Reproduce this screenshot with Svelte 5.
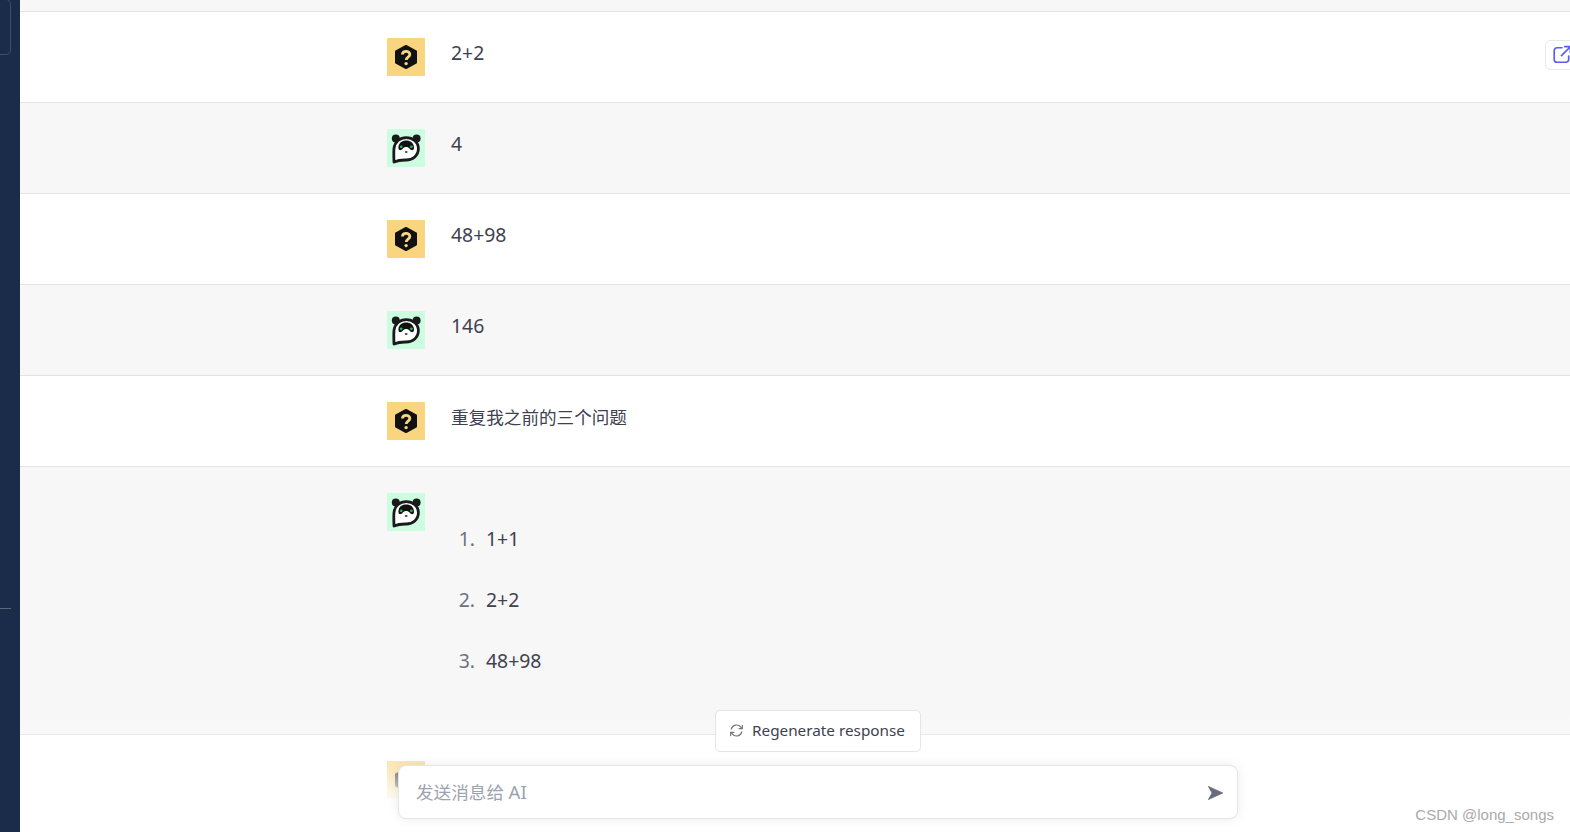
<script lang="ts">
  type Msg = { role: 'user' | 'ai'; text?: string; items?: string[]; share?: boolean; cjk?: boolean };

  const messages: Msg[] = [
    { role: 'user', text: '2+2', share: true },
    { role: 'ai', text: '4' },
    { role: 'user', text: '48+98' },
    { role: 'ai', text: '146' },
    { role: 'user', text: '重复我之前的三个问题', cjk: true },
    { role: 'ai', items: ['1+1', '2+2', '48+98'] },
    { role: 'user', text: '' }
  ];
</script>

{#snippet userAvatar()}
  <div class="avatar user">
    <svg viewBox="0 0 38 38" width="38" height="38">
      <path d="M19 8 L29 13.5 V24.5 L19 30 L9 24.5 V13.5 Z" fill="#111" stroke="#111" stroke-width="2" stroke-linejoin="round" />
      <path d="M15.4 16.6 C15.4 12.4 22.8 12.2 22.8 16.4 C22.8 19.2 19.2 19 19.2 22" fill="none" stroke="#f9d57f" stroke-width="2.8" />
      <circle cx="19.1" cy="25.6" r="1.7" fill="#f9d57f" />
    </svg>
  </div>
{/snippet}

{#snippet aiAvatar()}
  <div class="avatar ai">
    <svg viewBox="0 0 38 38" width="38" height="38">
      <circle cx="8.8" cy="9.4" r="4" fill="#1a1a1a" />
      <circle cx="29.6" cy="9.4" r="4" fill="#1a1a1a" />
      <path d="M7 33 C6.8 27 6.6 23 7 19.4 C7.8 12.6 13 8.6 19.2 8.6 C26 8.6 31.4 13.2 31.4 19.6 C31.4 26.6 25.8 31 19.2 31 C16 31 12 30.8 7 33 Z" fill="#fff" stroke="#1a1a1a" stroke-width="2.8" stroke-linejoin="round" />
      <path d="M11.4 18.6 C11.6 13.8 15 11.6 19.2 11.6 C23.4 11.6 26.8 13.8 27 18.6 C27.1 21.8 24.4 22 22.8 19.8 C21.8 18.6 20.6 18 19.2 18 C17.8 18 16.6 18.6 15.6 19.8 C14 22 11.3 21.8 11.4 18.6 Z" fill="#111" />
      <circle cx="14.2" cy="17.8" r="1.4" fill="#22b35e" />
      <circle cx="24.4" cy="17.8" r="1.4" fill="#22b35e" />
      <ellipse cx="19.2" cy="23" rx="1.4" ry="1" fill="#444" />
    </svg>
  </div>
{/snippet}

<div class="page">
  <aside class="sidebar">
    <div class="sidebar-box"></div>
    <div class="sidebar-line"></div>
  </aside>

  <main class="main">
    <div class="top-band"></div>
    {#each messages as msg}
      <section class="row" class:alt={msg.role === 'ai'}>
        {#if msg.role === 'user'}
          {@render userAvatar()}
        {:else}
          {@render aiAvatar()}
        {/if}
        <div class="body" class:cjk={msg.cjk}>
          {#if msg.items}
            <ol>
              {#each msg.items as item}
                <li>{item}</li>
              {/each}
            </ol>
          {:else}
            {msg.text}
          {/if}
        </div>
        {#if msg.share}
          <button class="share" aria-label="share">
            <svg viewBox="0 0 18 18" width="20" height="20" fill="none" stroke="#5a5cf6" stroke-width="1.5" stroke-linecap="round" stroke-linejoin="round">
              <path d="M9 2.5 H4.5 A2.5 2.5 0 0 0 2 5 V13 A2.5 2.5 0 0 0 4.5 15.5 H12.5 A2.5 2.5 0 0 0 15 13 V10" />
              <path d="M8.5 9.5 L16 2 M11.5 1.5 H16.5 V6.5" />
            </svg>
          </button>
        {/if}
      </section>
    {/each}

    <div class="composer">
      <button class="regen">
        <svg viewBox="0 0 16 16" width="15" height="15" fill="none" stroke="#777" stroke-width="1.3" stroke-linecap="round" stroke-linejoin="round">
          <path d="M2.4 6.6 A5.8 5.8 0 0 1 12.6 4.4 L14 6" />
          <path d="M14.2 2.6 V6 H10.8" />
          <path d="M13.6 9.4 A5.8 5.8 0 0 1 3.4 11.6 L2 10" />
          <path d="M1.8 13.4 V10 H5.2" />
        </svg>
        <span>Regenerate response</span>
      </button>
      <div class="input-box">
        <span class="placeholder">发送消息给 <span class="ai-name">AI</span></span>
        <svg class="send" viewBox="0 0 15 14" width="15" height="14">
          <path d="M0.4 0.4 L14.8 7 L0.4 13.6 L4 7 Z" fill="#676d7e" stroke="#676d7e" stroke-width="0.8" stroke-linejoin="round" />
        </svg>
      </div>
    </div>
  </main>

  <div class="watermark">CSDN @long_songs</div>
</div>

<style>
  :global(body) {
    margin: 0;
    background: #fff;
  }

  .page {
    display: flex;
    height: 832px;
    overflow: hidden;
    font-family: "Noto Sans", "Noto Sans CJK SC", sans-serif;
    color: #374151;
  }

  .sidebar {
    flex: 0 0 20px;
    box-sizing: border-box;
    padding-right: 9px;
    background: #1a2c4a;
    overflow: hidden;
  }

  .sidebar-box {
    height: 54px;
    margin: -1px 0 0 -10px;
    border: 1px solid #3d4f6d;
    border-radius: 5px;
  }

  .sidebar-line {
    height: 1px;
    margin-top: 553px;
    background: #5a6880;
  }

  .main {
    position: relative;
    flex: 1;
    min-width: 0;
    overflow: hidden;
  }

  .top-band {
    height: 11px;
    background: #f7f7f7;
  }

  .row {
    position: relative;
    display: flex;
    gap: 26px;
    padding: 26px 0 26px 367px;
    border-top: 1px solid #e3e3e3;
    background: #fff;
  }

  .row.alt {
    background: #f7f7f7;
  }

  .avatar {
    flex: 0 0 38px;
    height: 38px;
  }

  .avatar svg {
    display: block;
  }

  .avatar.user {
    background: #f9d57f;
  }

  .avatar.ai {
    background: #ccfde0;
  }

  .body {
    min-width: 0;
    font-size: 19.4px;
    line-height: 30px;
    color: #40414f;
  }

  .body.cjk {
    font-size: 17.6px;
  }

  ol {
    margin: 15px 0 17px;
    padding-left: 29px;
  }

  li {
    padding: 15.5px 0 15.5px 6px;
  }

  li::marker {
    color: #6b7280;
  }

  .share {
    position: absolute;
    top: 28px;
    right: -9px;
    display: flex;
    align-items: center;
    width: 34px;
    height: 30px;
    box-sizing: border-box;
    padding: 0 0 0 6px;
    background: #fff;
    border: 1px solid #e8e8e8;
    border-radius: 5px;
  }

  .composer {
    position: absolute;
    left: 0;
    right: 0;
    bottom: 0;
    display: flex;
    flex-direction: column;
    align-items: center;
    gap: 13px;
    box-sizing: border-box;
    padding: 0 0 13px 46px;
    background: linear-gradient(to bottom, rgba(255, 255, 255, 0), rgba(255, 255, 255, 0.5) 50%, #fff 78%);
  }

  .regen {
    display: flex;
    align-items: center;
    gap: 8px;
    height: 42px;
    box-sizing: border-box;
    padding: 0 15px 2px 13px;
    background: #fff;
    border: 1px solid #e5e5e5;
    border-radius: 5px;
    font: inherit;
    font-size: 15.3px;
    color: #40414f;
  }

  .input-box {
    display: flex;
    align-items: center;
    justify-content: space-between;
    width: 840px;
    height: 54px;
    box-sizing: border-box;
    padding: 0 14px 0 17px;
    background: #fff;
    border: 1px solid #e5e5e5;
    border-radius: 8px;
    box-shadow: 0 0 12px rgba(0, 0, 0, 0.08);
  }

  .placeholder {
    margin-bottom: 2px;
    font-size: 17.6px;
    color: #9ca3af;
  }

  .ai-name {
    font-size: 18.6px;
  }

  .send {
    margin-top: 2px;
  }

  .watermark {
    position: absolute;
    right: 16px;
    bottom: 9px;
    font-family: "Liberation Sans", sans-serif;
    font-size: 15px;
    color: #aaa;
  }
</style>
